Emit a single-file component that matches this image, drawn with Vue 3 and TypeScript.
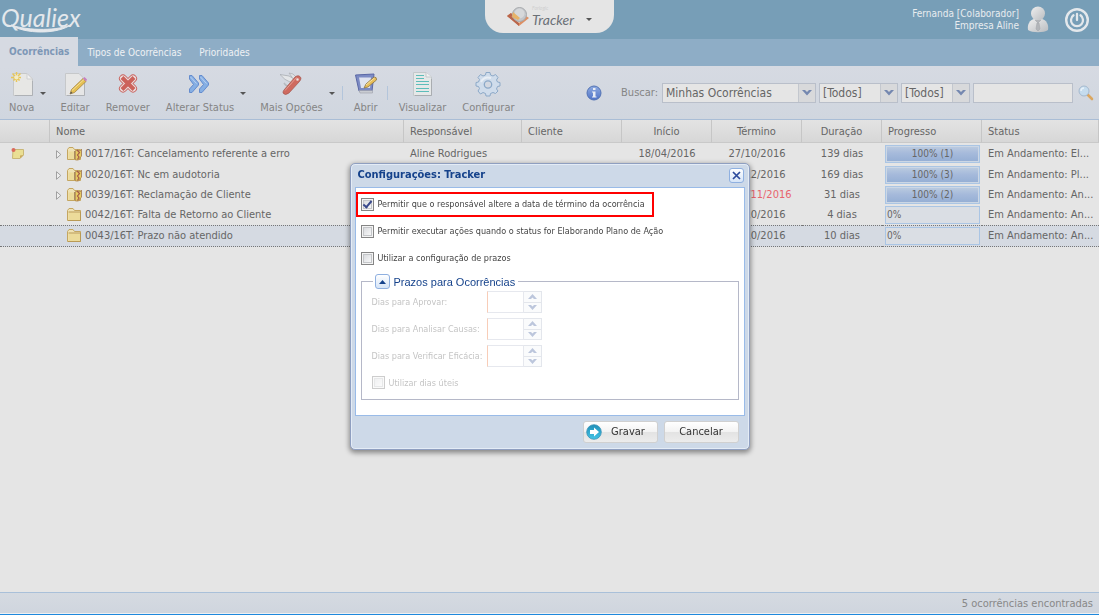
<script setup lang="ts">
import { ref } from 'vue'

interface Occurrence {
  id: string
  title: string
  owner: string
  start: string
  end: string
  late: boolean
  duration: string
  progress: number
  count: number
  status: string
  expandable: boolean
  note: boolean
}

const tabs = ['Ocorrências', 'Tipos de Ocorrências', 'Prioridades']
const activeTab = ref('Ocorrências')
const selected = ref('0043/16T')
const query = ref('')

const occurrences: Occurrence[] = [
  { id: '0017/16T', title: 'Cancelamento referente a erro', owner: 'Aline Rodrigues', start: '18/04/2016', end: '27/10/2016', late: false, duration: '139 dias', progress: 100, count: 1, status: 'Em Andamento: El...', expandable: true, note: true },
  { id: '0020/16T', title: 'Nc em audotoria', owner: '', start: '', end: '27/12/2016', late: false, duration: '169 dias', progress: 100, count: 3, status: 'Em Andamento: Pl...', expandable: true, note: false },
  { id: '0039/16T', title: 'Reclamação de Cliente', owner: '', start: '', end: '01/11/2016', late: true, duration: '31 dias', progress: 100, count: 2, status: 'Em Andamento: An...', expandable: true, note: false },
  { id: '0042/16T', title: 'Falta de Retorno ao Cliente', owner: '', start: '', end: '27/10/2016', late: false, duration: '4 dias', progress: 0, count: 0, status: 'Em Andamento: An...', expandable: false, note: false },
  { id: '0043/16T', title: 'Prazo não atendido', owner: '', start: '', end: '27/10/2016', late: false, duration: '10 dias', progress: 0, count: 0, status: 'Em Andamento: An...', expandable: false, note: false },
]

const allowEndDate = ref(true)
const allowRun = ref(false)
const useDeadlines = ref(false)

const deadlines = [
  { id: 'approve', label: 'Dias para Aprovar:' },
  { id: 'analyse', label: 'Dias para Analisar Causas:' },
  { id: 'verify', label: 'Dias para Verificar Eficácia:' },
]
</script>

<template>
  <div class="app">
    <header class="top">
      <div class="brand">
        <span class="brand-name">Qualiex</span>
        <svg class="swoosh" viewBox="0 0 64 10" width="64" height="10"><path d="M1 1C14 10 48 11 62 0C50 7 18 7 1 1Z" fill="#e4e8ec" stroke="#e4e8ec" /></svg>
      </div>
      <button class="module" type="button">
        <svg width="22" height="20" viewBox="0 0 22 20">
          <path d="M0 9L4 6L12 15L19 9L22 11L12 19Z" fill="#dd8f63" />
          <path d="M0 9L4 6L12 15V19Z" fill="#b9664c" />
          <path d="M4 9L12 16L20 9L12 14Z" fill="#f0d9c0" />
          <circle cx="12.500" cy="7.500" r="7" fill="#c3c6ca" stroke="#a6a9ac" />
          <circle cx="12.500" cy="6.500" r="5" fill="#d6d8da" />
          <path d="M6 5L13 11L11 13L5 10Z" fill="#e7b368" />
        </svg>
        <span class="module-text"><small>Forlogic</small><span>Tracker</span></span>
        <i class="caret"></i>
      </button>
      <div class="account">
        <div class="who"><span>Fernanda [Colaborador]</span><span>Empresa Aline</span></div>
        <svg width="22" height="27" viewBox="0 0 22 27">
          <defs><linearGradient id="person" x1="0" y1="0" x2="1" y2="1"><stop offset="0" stop-color="#efefef" /><stop offset="1" stop-color="#b9bcc0" /></linearGradient></defs>
          <path d="M1 24C0 18 3 14 7 13H15C19 14 22 18 21 24C17 27 5 27 1 24Z" fill="url(#person)" />
          <circle cx="11" cy="7.500" r="7" fill="url(#person)" />
          <path d="M8 14L11 17L14 14M10 17H12L13 23L11 25L9 23Z" fill="#b2b5b9" stroke="#a4a8ad" stroke-width=".6" />
        </svg>
        <button class="power" type="button" aria-label="Sair">
          <svg width="24" height="24" viewBox="0 0 24 24" fill="none" stroke="#e4e8ec" stroke-linecap="round">
            <circle cx="12" cy="12" r="10.800" stroke-width="2.400" />
            <path d="M8.500 7.300A6 6 0 1 0 15.500 7.300M12 6V12" stroke-width="2.300" />
          </svg>
        </button>
      </div>
    </header>

    <nav class="tabs">
      <button v-for="t in tabs" :key="t" type="button" :class="{ active: t === activeTab }" @click="activeTab = t">{{ t }}</button>
    </nav>

    <div class="toolbar">
      <button class="tool split" type="button">
        <span class="tool-body">
          <svg width="24" height="26" viewBox="0 0 24 26">
            <path d="M3.500 2.500H17L22.500 8V24.500H3.500Z" fill="#e7e7e5" stroke="#c6c8ca" />
            <path d="M17 2.500V8H22.500Z" fill="#f1f1f1" stroke="#cfd0d1" />
            <path d="M22.500 10V24.500H5" fill="none" stroke="#aeb1b5" />
            <path d="M6.500 1V12M1 6.500H12M2.500 2.500L10.500 10.500M10.500 2.500L2.500 10.500" stroke="#e8c758" stroke-width="1.500" stroke-dasharray="3.500 3" />
            <circle cx="6.500" cy="6.500" r="2" fill="#f3ecc6" />
          </svg>
          <span>Nova</span>
        </span>
        <i class="caret"></i>
      </button>
      <button class="tool" type="button">
        <svg width="24" height="26" viewBox="0 0 24 26">
          <path d="M2.500 2.500H16L21.500 8V24.500H2.500Z" fill="#e6e6e6" stroke="#c6c8ca" />
          <path d="M21.500 9V24.500H4" fill="none" stroke="#aeb1b5" />
          <path d="M7 23L8.500 18.500L20 7.500L23 10.500L11.500 21.500Z" fill="#e5bf52" stroke="#a68645" stroke-width=".8" />
          <path d="M9 19.500L21 8.500" stroke="#f3df96" stroke-width="1" />
          <path d="M20 7.500L21.500 6L24 8.500L23 10.500Z" fill="#c77fc0" />
          <path d="M7 23L8 20.500L9.500 22Z" fill="#555" />
        </svg>
        <span>Editar</span>
      </button>
      <button class="tool" type="button">
        <svg width="24" height="26" viewBox="0 0 24 26">
          <path d="M7 7.500L17 17.500M17 7.500L7 17.500" stroke="#c8605b" stroke-width="8" stroke-linecap="round" />
          <path d="M7 7.500L17 17.500M17 7.500L7 17.500" stroke="#ebdede" stroke-width="6.200" stroke-linecap="round" />
          <path d="M6 6.500L18 18.500M18 6.500L6 18.500" stroke="#cc625b" stroke-width="4" />
        </svg>
        <span>Remover</span>
      </button>
      <button class="tool split" type="button">
        <span class="tool-body">
          <svg width="24" height="26" viewBox="0 0 24 26" fill="#86afe3" stroke="#5c86cc" stroke-width=".9">
            <path d="M1.500 4.500H4L10.500 12V14L4 21.500H1.500V18L5.500 13.500L1.500 8Z" />
            <path d="M11.500 4.500H14L20.500 12V14L14 21.500H11.500V18L15.500 13.500L11.500 8Z" />
            <path d="M2.500 6L8.500 12.500M12.500 6L18.500 12.500" stroke="#bfd4ef" fill="none" />
          </svg>
          <span>Alterar Status</span>
        </span>
        <i class="caret"></i>
      </button>
      <button class="tool split" type="button">
        <span class="tool-body">
          <svg width="24" height="26" viewBox="0 0 24 26">
            <path d="M1 3.500L10 5L17 9L13 12Q5 9 1 3.500Z" fill="#e4e6e8" stroke="#a9adb3" stroke-width=".8" />
            <path d="M10 2L14 3L19 8L15 9Z" fill="#dfe1e4" stroke="#aeb2b8" stroke-width=".8" />
            <path d="M5 12Q8 17 12 13" fill="none" stroke="#b5b9be" stroke-width="1.500" />
            <path d="M5 19L16 6Q20 3 22 7Q22 9 20 11L10 22Q6 25 4 22Q4 20 5 19Z" fill="#cf6a5f" stroke="#a3564e" stroke-width=".7" />
            <path d="M6 19.500L17.500 6.500" stroke="#e39b91" />
            <path d="M17 8L20 9M19 7L18 10" stroke="#f0e2e0" />
          </svg>
          <span>Mais Opções</span>
        </span>
        <i class="caret"></i>
      </button>
      <i class="sep"></i>
      <button class="tool" type="button">
        <svg width="24" height="26" viewBox="0 0 24 26">
          <path d="M1.500 4L20 3L18 20H5Z" fill="#7c8bc4" stroke="#5a67a5" />
          <path d="M5 6.500H17L16 17H7Z" fill="#dfe3ef" />
          <path d="M5 19.500H18.500V22H6Z" fill="#c9ccd2" stroke="#9a9ea8" stroke-width=".6" />
          <path d="M10 17L12 13L20 6Q23 6 22.500 9L14 16Z" fill="#e8be59" stroke="#8c7443" stroke-width=".8" />
          <path d="M12 14L20.500 7" stroke="#f5e2a5" />
        </svg>
        <span>Abrir</span>
      </button>
      <i class="sep"></i>
      <button class="tool" type="button">
        <svg width="24" height="26" viewBox="0 0 24 26">
          <path d="M3.500 1.500H16L21.500 6V24.500H3.500Z" fill="#e5e8e8" stroke="#c3c8cb" />
          <path d="M21.500 8V24.500H5" fill="none" stroke="#a9adb1" />
          <path d="M16 1.500V6H21.500" fill="#f1f1f1" stroke="#c3c8cb" />
          <path d="M6 4.500H14M6 7.500H14M6 10.500H19M6 13.500H19M6 17.500H19M6 20.500H19" stroke="#5dbdba" />
        </svg>
        <span>Visualizar</span>
      </button>
      <button class="tool" type="button">
        <svg width="26" height="26" viewBox="0 0 26 26">
          <path d="M10.500 4L11 1.500H15L15.500 4L18 5L20.500 3.500L23 6.500L21.500 9L22.500 11L25 11.500V15L22.500 15.500L21.500 18L23 20L20.500 22.500L18 21.500L15.500 22.500L15 25H11L10.500 22.500L8 21.500L5.500 23L3 20L4.500 17.500L3.500 15.500L1 15V11.500L3.500 11L4.500 8.500L3 6.500L5.500 3.500L8 5Z" fill="#cfdceb" stroke="#8ca9c8" stroke-linejoin="round" />
          <path d="M6 11Q9 5 16 7" stroke="#e8eef5" stroke-width="2" fill="none" />
          <circle cx="13" cy="13.500" r="3.700" fill="#d3d8e1" stroke="#8ca9c8" stroke-width="1.300" />
        </svg>
        <span>Configurar</span>
      </button>

      <form class="search" @submit.prevent>
        <svg class="info" width="16" height="16" viewBox="0 0 16 16">
          <defs><linearGradient id="info" x1="0" y1="0" x2="0" y2="1"><stop offset="0" stop-color="#8fabe0" /><stop offset="1" stop-color="#4f73c8" /></linearGradient></defs>
          <circle cx="8" cy="8" r="7" fill="url(#info)" stroke="#5373b4" />
          <path d="M7 3H9.500V5H7ZM6 6.500H9.500V11.500H10.500V12.500H6V11.500H7V7.500H6Z" fill="#e9edf5" />
        </svg>
        <label for="scope">Buscar:</label>
        <span class="combo scope"><select id="scope"><option>Minhas Ocorrências</option></select><svg viewBox="0 0 10 6" width="10" height="6"><path d="M0 0H3L5 2L7 0H10L5 5.500Z" fill="#7588b0" /></svg></span>
        <span class="combo type"><select aria-label="Tipo"><option>[Todos]</option></select><svg viewBox="0 0 10 6" width="10" height="6"><path d="M0 0H3L5 2L7 0H10L5 5.500Z" fill="#7588b0" /></svg></span>
        <span class="combo state"><select aria-label="Situação"><option>[Todos]</option></select><svg viewBox="0 0 10 6" width="10" height="6"><path d="M0 0H3L5 2L7 0H10L5 5.500Z" fill="#7588b0" /></svg></span>
        <input v-model="query" class="query" type="text" aria-label="Texto da busca" />
        <button class="go" type="submit" aria-label="Pesquisar">
          <svg width="16" height="16" viewBox="0 0 16 16"><path d="M9 9L14 14" stroke="#dba760" stroke-width="2.600" stroke-linecap="round" /><circle cx="6" cy="6" r="5" fill="#c5dcee" stroke="#a5b9ce" /><path d="M3 6Q3 3 6 3" fill="none" stroke="#e8f2f9" stroke-width="1.500" /></svg>
        </button>
      </form>
    </div>

    <main class="grid">
      <table>
        <colgroup>
          <col class="c-note" /><col /><col class="c-owner" /><col class="c-client" /><col class="c-date" /><col class="c-date" /><col class="c-days" /><col class="c-progress" /><col class="c-status" />
        </colgroup>
        <thead>
          <tr>
            <th></th><th>Nome</th><th>Responsável</th><th>Cliente</th><th class="mid">Início</th><th class="mid">Término</th><th class="mid">Duração</th><th>Progresso</th><th>Status</th>
          </tr>
        </thead>
        <tbody>
          <tr v-for="o in occurrences" :key="o.id" :class="{ selected: o.id === selected }" @click="selected = o.id">
            <td class="note">
              <svg v-if="o.note" width="14" height="12" viewBox="0 0 14 12"><path d="M2 1.500H12.500V7L9 10.500H1.500Z" fill="#eadf94" stroke="#c9b778" /><path d="M12.500 7L9 10.500V7.500Z" fill="#c9a95e" /><circle cx="2.500" cy="2" r="2" fill="#da6a5b" /></svg>
            </td>
            <td class="name">
              <div>
                <span class="twist"><svg v-if="o.expandable" width="6" height="9" viewBox="0 0 6 9"><path d="M.5 .7V8.300L4.800 4.500Z" fill="#eee" stroke="#999" stroke-width=".9" /></svg></span>
                <svg width="16" height="14" viewBox="0 0 16 14">
                  <path d="M.5 12.500V2.500L2 .5H6L7.500 2.500H13.500V12.500Z" fill="#efe2b4" stroke="#c4a661" />
                  <path d="M1.500 12V4.500H13V12Z" fill="#ecdb9a" />
                  <path v-if="!o.expandable" d="M1.500 4H13.500V12.500H1" fill="none" stroke="#b99a55" />
                  <g v-else>
                    <path d="M8.500 3.500H14.500V9L11.500 13H8.500Z" fill="#e6cb62" stroke="#b08a4e" stroke-width=".8" />
                    <path d="M7.500 4V12" stroke="#a98a62" />
                    <path d="M10 3L12.500 5.500L10.500 8L12 10L10.500 12.500" fill="none" stroke="#a45a48" stroke-width="1.200" />
                    <path d="M14.500 2V9" stroke="#a98a62" />
                  </g>
                </svg>
                <span>{{ o.id }}: {{ o.title }}</span>
              </div>
            </td>
            <td>{{ o.owner }}</td>
            <td></td>
            <td class="mid">{{ o.start }}</td>
            <td class="mid" :class="{ late: o.late }">{{ o.end }}</td>
            <td class="mid">{{ o.duration }}</td>
            <td class="prog">
              <div class="bar" :class="{ full: o.progress > 0 }">{{ o.progress }}%<template v-if="o.count"> ({{ o.count }})</template></div>
            </td>
            <td>{{ o.status }}</td>
          </tr>
        </tbody>
      </table>
    </main>

    <footer class="foot">{{ occurrences.length }} ocorrências encontradas</footer>

    <div class="mask">
      <section class="dialog" role="dialog" aria-labelledby="dlg-title">
        <div class="dialog-head">
          <h2 id="dlg-title">Configurações: Tracker</h2>
          <button class="close" type="button" aria-label="Fechar">
            <svg width="9" height="9" viewBox="0 0 9 9"><path d="M1 1L8 8M8 1L1 8" stroke="#2b4a9c" stroke-width="1.700" /></svg>
          </button>
        </div>
        <div class="dialog-body">
          <label class="opt marked"><input v-model="allowEndDate" type="checkbox" />Permitir que o responsável altere a data de término da ocorrência</label>
          <label class="opt"><input v-model="allowRun" type="checkbox" />Permitir executar ações quando o status for Elaborando Plano de Ação</label>
          <label class="opt"><input v-model="useDeadlines" type="checkbox" />Utilizar a configuração de prazos</label>
          <fieldset>
            <legend>
              <button class="toggle" type="button" aria-label="Recolher"><svg width="7" height="4" viewBox="0 0 7 4"><path d="M3.500 0L7 4H0Z" fill="#15428b" /></svg></button>
              <span>Prazos para Ocorrências</span>
            </legend>
            <div class="fields">
              <div v-for="d in deadlines" :key="d.id" class="field">
                <label :for="d.id">{{ d.label }}</label>
                <span class="spin">
                  <input :id="d.id" type="text" disabled />
                  <span class="spin-buttons">
                    <button type="button" disabled aria-label="Aumentar"><svg width="9" height="5" viewBox="0 0 9 5"><path d="M0 5L4.500 0L9 5H6L4.500 3.500L3 5Z" fill="#bcc6dc" /></svg></button>
                    <button type="button" disabled aria-label="Diminuir"><svg width="9" height="5" viewBox="0 0 9 5"><path d="M0 0L4.500 5L9 0H6L4.500 1.500L3 0Z" fill="#bcc6dc" /></svg></button>
                  </span>
                </span>
              </div>
              <label class="field off"><input type="checkbox" disabled />Utilizar dias úteis</label>
            </div>
          </fieldset>
        </div>
        <div class="dialog-foot">
          <button class="action" type="button">
            <svg width="16" height="16" viewBox="0 0 16 16">
              <defs><linearGradient id="save" x1="0" y1="0" x2="0" y2="1"><stop offset="0" stop-color="#1f8fb8" /><stop offset="1" stop-color="#45c4e6" /></linearGradient></defs>
              <circle cx="8" cy="8" r="7.300" fill="url(#save)" stroke="#3a92b5" stroke-width=".8" />
              <path d="M4 6H8V3.500L13 8L8 12.500V10H4Z" fill="#fff" />
            </svg>
            <span>Gravar</span>
          </button>
          <button class="action" type="button"><span>Cancelar</span></button>
        </div>
      </section>
    </div>
  </div>
</template>

<style>
body {
  margin: 0;
  background: #e5e5e5;
}
</style>

<style scoped>
.app {
  display: flex;
  flex-direction: column;
  min-height: 100vh;
  background: #e5e5e5;
  font: 11px/14px "DejaVu Sans Condensed", "Noto Sans", sans-serif;
  color: #666;
}
.app *,
.app *::before,
.app *::after {
  box-sizing: border-box;
}
button,
input,
select {
  font: inherit;
  color: inherit;
  margin: 0;
  padding: 0;
  border: 0;
  background: none;
}
svg {
  display: block;
  flex: none;
}
.caret {
  flex: none;
  border: solid transparent;
  border-width: 3px 3px 0;
  border-top-color: #555;
}

.top {
  display: grid;
  grid-template-columns: 1fr auto 1fr;
  height: 39px;
  background: #779eb7;
}
.brand {
  display: flex;
  flex-direction: column;
  padding-left: 1px;
  color: #e4e8ec;
}
.brand-name {
  font: italic 25px/34px Lato, sans-serif;
}
.swoosh {
  margin: -10px 0 0 9px;
}
.module {
  display: flex;
  justify-content: center;
  align-items: center;
  width: 129px;
  height: 33px;
  border-radius: 0 0 18px 18px;
  background: #e5e5e5;
}
.module .caret {
  margin: 5px 0 0 12px;
}
.module-text {
  display: flex;
  flex-direction: column;
  align-items: flex-start;
  margin-left: 3px;
  font: italic 14px/17px Lato, sans-serif;
  color: #6b7177;
}
.module-text small {
  font-size: 5px;
  line-height: 6px;
  color: #cfcfcf;
}
.account {
  display: flex;
  justify-content: flex-end;
  align-items: center;
  padding-right: 10px;
  color: #e8ecef;
}
.who {
  display: flex;
  flex-direction: column;
  margin-right: 8px;
  font-size: 10px;
  line-height: 12px;
  text-align: right;
}
.power {
  margin-left: 16px;
}

.tabs {
  display: flex;
  height: 27px;
  background: #8eadc6;
  font-size: 10px;
}
.tabs button {
  padding: 0 9px;
  color: #eef1f4;
}
.tabs .active {
  height: 29px;
  margin-top: -2px;
  background: #d6dae2;
  color: #7d97b6;
  font-weight: bold;
}

.toolbar {
  display: flex;
  height: 54px;
  padding-left: 1px;
  border-bottom: 1px solid #a9bdd6;
  background: linear-gradient(#d6dae2, #d0d6df);
  color: #858585;
}
.tool {
  display: flex;
  flex-direction: column;
  align-items: center;
  padding: 5px 8px 0;
  white-space: nowrap;
}
.tool span {
  line-height: 14px;
}
.tool > svg,
.tool-body > svg {
  margin-bottom: 4px;
}
.split {
  flex-direction: row;
  align-items: flex-start;
  gap: 6px;
  padding-right: 6px;
}
.tool-body {
  display: flex;
  flex-direction: column;
  align-items: center;
}
.split .caret {
  margin-top: 21px;
}
.sep {
  width: 4px;
  height: 14px;
  margin: 20px 0 0 1px;
  border-left: 1px solid #b3c5db;
}

.search {
  display: flex;
  align-items: center;
  gap: 3px;
  margin-left: auto;
  padding-right: 5px;
}
.search label {
  margin: 0 1px 0 16px;
}
.combo {
  display: flex;
  align-items: center;
  position: relative;
  height: 20px;
  border: 1px solid #b9bfca;
  background: linear-gradient(to right, transparent calc(100% - 17px), #c3c7ce calc(100% - 17px), #c3c7ce calc(100% - 16px), #d8d9db calc(100% - 16px)), #e5e5e5;
}
.combo select {
  width: 100%;
  height: 18px;
  padding: 0 18px 0 3px;
  appearance: none;
  font-size: 12px;
  color: #666;
}
.combo svg {
  position: absolute;
  right: 3px;
  pointer-events: none;
}
.scope { width: 154px; }
.type { width: 79px; }
.state { width: 69px; }
.query {
  width: 100px;
  height: 20px;
  border: 1px solid #b9bfca;
  background: #e5e5e5;
}
.go {
  margin-left: 2px;
}

.grid {
  flex: 1;
}
table {
  width: 100%;
  table-layout: fixed;
  border-collapse: separate;
  border-spacing: 0;
}
.c-note { width: 50px; }
.c-owner { width: 118px; }
.c-client { width: 100px; }
.c-date { width: 90px; }
.c-days { width: 80px; }
.c-progress { width: 100px; }
.c-status { width: 117px; }
th {
  height: 23px;
  padding: 1px 6px 0;
  border-right: 1px solid #c6c6c6;
  border-bottom: 1px solid #c9c9c9;
  background: linear-gradient(#e3e3e3, #d7d7d7);
  font-weight: normal;
  text-align: left;
}
td {
  height: 20px;
  padding: 0 6px;
  white-space: nowrap;
}
tbody tr:first-child td {
  height: 22px;
}
.mid {
  text-align: center;
}
.late {
  padding-left: 18px;
  color: #e8646e;
}
.note svg {
  margin-left: 5px;
}
.name > div {
  display: flex;
  align-items: center;
}
.name > div > svg {
  margin-right: 2px;
}
.twist {
  width: 11px;
}
.prog {
  padding: 0 2px 0 3px;
}
.bar {
  height: 18px;
  padding-left: 1px;
  border: 1px solid #aac5e4;
  background: #dadee4;
  font-size: 10px;
  line-height: 16px;
}
.full {
  padding: 0;
  background: linear-gradient(#bccce0, #a6badb 45%, #94aed4);
  box-shadow: inset 0 0 0 1px #ccd7e5;
  text-align: center;
}
.selected td {
  height: 22px;
  border-top: 1px dotted #777;
  border-bottom: 1px dotted #777;
  background: #d5dae2;
}

.foot {
  height: 23px;
  padding: 0 6px;
  border-top: 1px solid #a9c0d9;
  border-bottom: 1px solid #1e88dd;
  background: linear-gradient(#d5dae1, #cfd5de);
  box-shadow: inset 0 -1px #eef0f3;
  line-height: 21px;
  color: #888;
  text-align: right;
}

.mask {
  position: fixed;
  inset: 0;
  display: grid;
  place-items: center;
  padding-bottom: 3px;
}
.dialog {
  width: 400px;
  padding: 0 4px;
  border: 1px solid #8f9fc0;
  border-radius: 5px;
  background: #cdd9e8;
  box-shadow: inset 0 0 0 1px #e4ecf6, 0 2px 5px 1px rgba(0, 0, 0, .4);
  color: #444;
}
.dialog-head {
  display: flex;
  justify-content: space-between;
  align-items: center;
  height: 23px;
  padding: 0 1px 0 3px;
}
h2 {
  margin: 0;
  font-size: 11px;
  line-height: 14px;
  color: #15428b;
}
.close,
.toggle {
  display: grid;
  place-items: center;
  width: 15px;
  height: 15px;
  border: 1px solid #8fb0e0;
  border-radius: 3px;
  background: linear-gradient(#fff, #d5e4f7);
}
.dialog-body {
  padding: 3px 0 15px;
  border: 1px solid #99bbe8;
  background: #fff;
  font-size: 9px;
}
.opt {
  display: flex;
  align-items: center;
  gap: 4px;
  height: 27px;
  padding-left: 5px;
}
.marked {
  width: 298px;
  height: 25px;
  margin: 1px 0;
  padding-left: 3px;
  border: 2px solid #f00;
  white-space: nowrap;
}
input[type="checkbox"] {
  display: grid;
  place-items: center;
  flex: none;
  width: 13px;
  height: 13px;
  appearance: none;
  border: 1px solid #858585;
  background: linear-gradient(135deg, #d2d4d8, #fff);
  box-shadow: inset 0 0 0 1px #f4f4f4, inset 0 0 0 2px #c4c6c9;
}
input[type="checkbox"]:checked::after {
  content: "";
  width: 5px;
  height: 9px;
  margin-bottom: 3px;
  border: solid #39498c;
  border-width: 0 2px 2px 0;
  transform: rotate(40deg);
}
fieldset {
  margin: 2px 5px 0;
  padding: 0 10px 5px;
  border: 1px solid #b5b8c8;
}
legend {
  display: flex;
  align-items: center;
  gap: 4px;
  height: 16px;
  margin-left: 1px;
  padding: 0 3px 0 2px;
  font: 11px/16px "Liberation Sans", Arial, sans-serif;
  color: #15428b;
}
.fields {
  display: grid;
  gap: 5px;
  padding-top: 1px;
  color: #c4c4c4;
}
.field {
  display: flex;
  align-items: center;
  height: 22px;
}
.field > label {
  width: 115px;
  white-space: nowrap;
}
.off {
  gap: 4px;
}
.off input {
  opacity: .4;
}
.spin {
  display: flex;
  width: 55px;
  height: 22px;
}
.spin input {
  width: 37px;
  border: 1px solid #e6e8ee;
  border-left-color: #f8cdb8;
}
.spin-buttons {
  display: grid;
  grid-template-rows: 1fr 1fr;
  width: 18px;
}
.spin-buttons button {
  display: grid;
  place-items: center;
  border: solid #e3e6ec;
  border-width: 1px 1px 0 0;
  background: #fafbfc;
}
.spin-buttons button:last-child {
  border-bottom-width: 1px;
}
.dialog-foot {
  display: flex;
  justify-content: flex-end;
  gap: 6px;
  padding: 5px 6px 6px;
}
.action {
  display: flex;
  align-items: center;
  width: 75px;
  height: 22px;
  padding: 0 2px;
  border: 1px solid #d0d0d0;
  border-radius: 3px;
  background: linear-gradient(#fff, #f3f3f3 48%, #e3e3e3 52%, #ececec);
  color: #333;
}
.action span {
  flex: 1;
  text-align: center;
}
</style>
